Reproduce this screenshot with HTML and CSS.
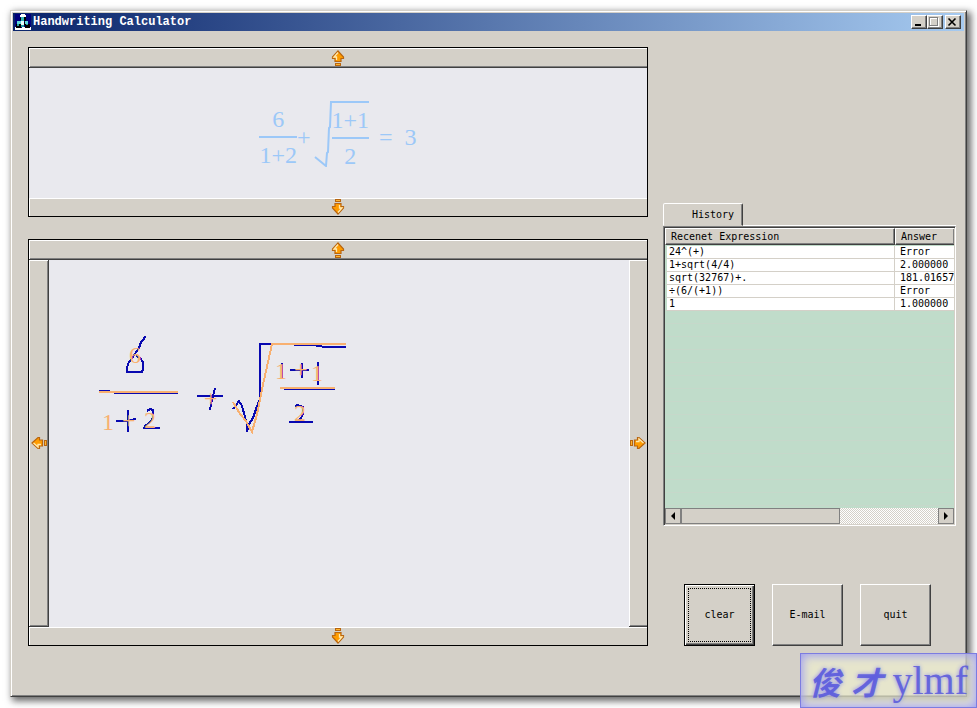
FILE: index.html
```html
<!DOCTYPE html>
<html lang="en">

<head>
  <meta charset="UTF-8">
  <meta name="viewport" content="width=device-width, initial-scale=1.0">
  <title>Handwriting Calculator</title>
  <link rel="stylesheet" href="styles.css">
</head>

<body>
  <!-- arrow shared by all scroll bars, pointing up -->
  <svg class="defs" aria-hidden="true">
    <symbol id="arrow" viewBox="0 0 14 16">
      <path d="M7 1 L12.500 7 V8.500 H10 V11.500 H4 V8.500 H1.500 V7 Z" fill="#ff9c00" stroke="#b8650f" stroke-width="1.200" />
      <path d="M7 2.500 L3 7 H5.500 V10" fill="none" stroke="#ffe9b0" stroke-width="1.300" />
      <rect x="4.500" y="13.500" width="5" height="2" fill="#ffb52e" stroke="#b8650f" />
    </symbol>
  </svg>

  <div class="window">
    <header class="title-bar">
      <svg class="app-icon" viewBox="0 0 16 16" shape-rendering="crispEdges" aria-hidden="true">
        <rect width="16" height="16" fill="#00007c" />
        <path d="M0 13h3v1h4v-1h3v1h4v-1h2v3H0z" fill="#fff" />
        <path d="M5 1h1V0h4v1h1v2h-1v1H6V3H5z" fill="#fff" />
        <path d="M6 3h3v4H6z" fill="#35b5b5" />
        <path d="M9 3h2v4H9zM5 4h1v2H5z" fill="#000" />
        <path d="M2 7h4v3H2zM10 7h3v3h-3z" fill="#5fdada" />
        <path d="M6 7h3v4H6z" fill="#e8ffff" />
        <path d="M1 10h5v4H1zM10 10h5v4h-5zM9 8h1v3H9z" fill="#000" />
        <path d="M2 10h2v2H2zM6 11h3v2H6zM11 10h2v1h-2z" fill="#2a9f9f" />
      </svg>
      <h1 class="title">Handwriting Calculator</h1>
      <div class="window-buttons">
        <button class="window-button" aria-label="Minimize">
          <svg viewBox="0 0 12 10"><path d="M3 7h6v2H3z" fill="#000" /></svg>
        </button>
        <button class="window-button" aria-label="Maximize" disabled>
          <svg viewBox="0 0 12 10" shape-rendering="crispEdges"><path d="M2.500 1.500h8v8h-8z" fill="none" stroke="#fff" /><path d="M1.500 .5h8v8h-8z" fill="none" stroke="#808080" /></svg>
        </button>
        <button class="window-button close" aria-label="Close">
          <svg viewBox="0 0 12 10"><path d="M2.500 1.500l7 7M9.500 1.500l-7 7" stroke="#000" stroke-width="1.600" /></svg>
        </button>
      </div>
    </header>

    <main class="content">
      <div class="panels">
        <section class="panel result">
          <button class="bar top" aria-label="Scroll result up"><svg class="arrow"><use href="#arrow" /></svg></button>
          <div class="formula">
            <div class="fraction"><span>6</span><span>1+2</span></div>
            <span class="plus">+</span>
            <div class="root">
              <svg class="radical" viewBox="0 0 18 66" aria-hidden="true">
                <path d="M1 56 L12 65 L13 52 L14 51 L15 27 L16 26 L17 1 H18" />
              </svg>
              <div class="fraction"><span>1+1</span><span>2</span></div>
            </div>
            <span class="equals">=</span>
            <span>3</span>
          </div>
          <button class="bar bottom" aria-label="Scroll result down"><svg class="arrow down"><use href="#arrow" /></svg></button>
        </section>

        <section class="panel writing">
          <button class="bar top" aria-label="Scroll up"><svg class="arrow"><use href="#arrow" /></svg></button>
          <div class="middle">
            <button class="bar left" aria-label="Scroll left"><svg class="arrow turn-left"><use href="#arrow" /></svg></button>
            <div class="canvas">
              <svg class="ink" width="320" height="200">
                <!-- pen strokes -->
                <g class="pen">
                  <path d="M96 76 L95 79 L92 82 L90 88 L87 92 L84 97 L80 102 L78 107 L78 112 H93 L94 109 V102 L91 98 L87 96" />
                  <path d="M50 131 H59 L67 133 H129" />
                  <path d="M67 161 H76 L87 159 M79 150 V172" />
                  <path d="M98 151 L101 149 L104 150 V157 L102 161 L95 167 M94 168 H111" />
                  <path d="M148 136 H174 M166 128 L164 136 L163 139 L161 150" />
                  <path d="M184 149 L187 145 L190 141 L193 146 L196 157 L198 164 V172 L200 164 L204 158 L208 146 L211 139 V84 H224 L264 85 L276 87 H297" />
                  <path d="M233 103 V119 M241 110 H260 M253 103 V118 M269 102 V125" />
                  <path d="M235 129 H286" />
                  <path d="M246 146 L249 145 L254 147 V154 L252 158 L247 162 M240 162 H264" />
                </g>
                <!-- recognised characters -->
                <g class="guess">
                  <path d="M50 132 H129 M231 128 H286" />
                  <path d="M184 142 L191 154 L197 161 L203 172 L208 154 L215 120 L223 84 H297" />
                  <text x="80" y="103">6</text>
                  <text x="53" y="170">1</text>
                  <text x="73" y="168">+</text>
                  <text x="95" y="168">2</text>
                  <text x="155" y="146">+</text>
                  <text x="226" y="119">1</text>
                  <text x="245" y="117">+</text>
                  <text x="262" y="121">1</text>
                  <text x="245" y="161">2</text>
                </g>
              </svg>
            </div>
            <button class="bar right" aria-label="Scroll right"><svg class="arrow turn-right"><use href="#arrow" /></svg></button>
          </div>
          <button class="bar bottom" aria-label="Scroll down"><svg class="arrow down"><use href="#arrow" /></svg></button>
        </section>
      </div>

      <aside class="side">
        <div class="tabs">
          <button class="tab">History</button>
          <div class="tab-line"></div>
        </div>
        <div class="list">
          <div class="list-view">
            <table class="history">
              <thead>
                <tr><th>Recenet Expression</th><th>Answer</th></tr>
              </thead>
              <tbody>
                <tr><td>24^(+)</td><td>Error</td></tr>
                <tr><td>1+sqrt(4/4)</td><td>2.000000</td></tr>
                <tr><td>sqrt(32767)+.</td><td>181.01657</td></tr>
                <tr><td>÷(6/(+1))</td><td>Error</td></tr>
                <tr><td>1</td><td>1.000000</td></tr>
              </tbody>
            </table>
            <div class="empty-rows"></div>
          </div>
          <div class="scrollbar">
            <button class="scroll-button" aria-label="Scroll list left"><svg viewBox="0 0 8 8"><path d="M6 0v8L2 4z" /></svg></button>
            <div class="thumb"></div>
            <div class="track"></div>
            <button class="scroll-button" aria-label="Scroll list right"><svg viewBox="0 0 8 8"><path d="M2 0v8l4-4z" /></svg></button>
          </div>
        </div>

        <div class="actions">
          <button class="action default"><span>clear</span></button>
          <button class="action"><span>E-mail</span></button>
          <button class="action"><span>quit</span></button>
        </div>
      </aside>
    </main>
  </div>

  <div class="watermark">
    <span class="name">俊</span>
    <span class="name">才</span>
    <span class="latin">ylmf</span>
  </div>
</body>

</html>
```
FILE: styles.css
```css
* {
  box-sizing: border-box;
}

body {
  margin: 0;
  min-height: 100vh;
  display: flex;
  padding: 10px 10px 11px;
  background-color: #fff;
  color: #000;
  font-family: "DejaVu Sans Mono", "Noto Sans CJK SC", monospace;
  font-size: 10px;
  line-height: 12px;
}

button {
  margin: 0;
  padding: 0;
  font: inherit;
  color: inherit;
  background-color: #d4d0c8;
}

.defs {
  position: absolute;
  width: 0;
  height: 0;
}

/* Window frame */
.window {
  flex: 1;
  display: flex;
  flex-direction: column;
  padding: 1px;
  background-color: #d4d0c8;
  border: 1px solid;
  border-color: #d4d0c8 #404040 #404040 #d4d0c8;
  box-shadow: inset 1px 1px #fff, inset -1px -1px #808080, 3px 3px 7px 1px rgba(0, 0, 0, 0.6);
}

.title-bar {
  display: flex;
  align-items: center;
  height: 18px;
  margin: 1px 1px 0;
  padding: 0 3px 0 2px;
  gap: 2px;
  background: linear-gradient(to right, #0a246a, #a6caf0);
}

.app-icon {
  width: 16px;
  height: 16px;
}

.title {
  flex: 1;
  margin: 0;
  color: #fff;
  font-family: "Liberation Mono", monospace;
  font-size: 12px;
  font-weight: bold;
}

.window-buttons {
  display: flex;
}

.window-button {
  width: 16px;
  height: 14px;
  border: 1px solid;
  border-color: #fff #404040 #404040 #fff;
  box-shadow: inset -1px -1px #808080;
}

.window-button svg {
  display: block;
  width: 12px;
  height: 10px;
}

.window-button.close {
  margin-left: 2px;
}

/* Page below the title bar */
.content {
  flex: 1;
  display: grid;
  grid-template-columns: 620fr 293fr;
  gap: 15px;
  padding: 16px 9px 49px 16px;
}

.panels {
  display: flex;
  flex-direction: column;
  gap: 22px;
}

.panel {
  display: flex;
  flex-direction: column;
  border: 1px solid #000;
  background-color: #e9e9ee;
}

.writing {
  flex: 1;
}

.bar {
  display: flex;
  align-items: center;
  justify-content: center;
  border: 0 solid #404040;
}

.top {
  height: 20px;
  border-bottom-width: 1px;
  box-shadow: inset 1px 1px #fff, inset 0 -1px #808080;
}

.bottom {
  height: 18px;
  box-shadow: inset 1px 1px #fff;
}

.left {
  width: 20px;
  border-width: 0 1px 1px 0;
  box-shadow: inset 1px 1px #fff, inset -1px -1px #808080;
}

.right {
  width: 18px;
  border-bottom-width: 1px;
  box-shadow: inset 1px 1px #fff, inset 0 -1px #808080;
}

.arrow {
  flex: none;
  width: 14px;
  height: 16px;
}

.down {
  transform: rotate(180deg);
}

.turn-left {
  transform: rotate(-90deg);
}

.turn-right {
  transform: rotate(90deg);
}

.middle {
  flex: 1;
  display: flex;
}

.canvas {
  flex: 1;
}

/* Recognised formula with its result */
.formula {
  display: flex;
  align-items: center;
  justify-content: center;
  height: 130px;
  padding-top: 8px;
  color: #9cc8f8;
  font-family: "Liberation Serif", serif;
  font-size: 24px;
  line-height: 34px;
}

.fraction {
  display: flex;
  flex-direction: column;
  text-align: center;
}

.fraction span:first-child {
  border-bottom: 2px solid #9cc8f8;
}

.root {
  display: flex;
  margin-left: 3px;
}

.root .fraction {
  border-top: 2px solid #9cc8f8;
  line-height: 34px;
}

.radical {
  width: 18px;
  height: 66px;
  fill: none;
  stroke: #9cc8f8;
  stroke-width: 2;
}

.equals {
  margin: 0 12px 0 10px;
}

/* Handwriting area */
.ink {
  display: block;
}

.pen {
  fill: none;
  stroke: #0808b0;
  stroke-width: 2;
  shape-rendering: crispEdges;
}

.guess path {
  fill: none;
  stroke: #f8b070;
  stroke-width: 2;
  shape-rendering: crispEdges;
}

.guess text {
  fill: #f8b070;
  font-family: "Liberation Serif", serif;
  font-size: 24px;
}

/* History list */
.side {
  display: flex;
  flex-direction: column;
  min-width: 0;
  padding-top: 156px;
}

.tabs {
  display: flex;
}

.tab {
  width: 80px;
  height: 23px;
  padding-left: 20px;
  border: 1px solid;
  border-color: #fff #404040 transparent #fff;
  border-radius: 2px 2px 0 0;
  box-shadow: inset -1px 0 #808080;
}

.tab-line {
  flex: 1;
  border-bottom: 1px solid #fff;
}

.list {
  display: flex;
  flex-direction: column;
  height: 300px;
  border: 1px solid;
  border-color: #808080 #fff #fff #808080;
  box-shadow: inset 1px 1px #404040, inset -1px -1px #d4d0c8;
  padding: 1px;
}

.list-view {
  flex: 1;
  display: flex;
  flex-direction: column;
  overflow: hidden;
  background-color: #c0dcca;
}

.history {
  width: 100%;
  table-layout: fixed;
  border-collapse: separate;
  border-spacing: 0;
}

.history th {
  height: 17px;
  padding: 1px 0 0 5px;
  text-align: left;
  font-weight: normal;
  white-space: nowrap;
  background-color: #d4d0c8;
  border: 1px solid;
  border-color: #fff #404040 #404040 #fff;
  box-shadow: inset -1px -1px #808080;
}

.history th:first-child {
  width: 230px;
}

.history th:last-child {
  border-right: 0;
}

.history td {
  height: 13px;
  padding: 0 0 0 5px;
  white-space: nowrap;
  overflow: hidden;
  background-color: #fff;
  border-bottom: 1px solid #d4d0c8;
}

.history tbody tr:first-child td {
  border-top: 1px solid #c0dcca;
}

.history td:first-child {
  padding-left: 2px;
  border-left: 2px solid #c0dcca;
  border-right: 1px solid #d4d0c8;
}

.empty-rows {
  flex: 1;
  background: repeating-linear-gradient(transparent 0 12px, #c6d8ca 12px 13px);
}

.scrollbar {
  display: flex;
  height: 16px;
}

.scroll-button {
  width: 16px;
  border: 1px solid #808080;
}

.scroll-button svg {
  display: block;
  width: 8px;
  height: 8px;
  margin: 0 auto;
}

.thumb {
  flex: 158;
  border: 1px solid #808080;
  background-color: #d4d0c8;
}

.track {
  flex: 99;
  background: repeating-conic-gradient(#fff 0 25%, #d4d0c8 0 50%) 0 0 / 2px 2px;
}

/* Buttons */
.actions {
  display: flex;
  gap: 17px;
  margin-top: auto;
  padding-left: 21px;
}

.action {
  width: 71px;
  height: 62px;
  border: 1px solid;
  border-color: #fff #404040 #404040 #fff;
  box-shadow: inset -1px -1px #808080;
}

.default {
  padding: 3px;
  border-color: #000;
  box-shadow: inset 1px 1px #fff, inset -1px -1px #404040, inset -2px -2px #808080;
}

.default span {
  display: flex;
  align-items: center;
  justify-content: center;
  height: 100%;
  border: 1px dotted #000;
}

/* Stamp over the window corner */
.watermark {
  position: absolute;
  right: 0;
  bottom: 0;
  display: flex;
  align-items: center;
  justify-content: space-between;
  width: 177px;
  height: 55px;
  padding: 0 8px;
  color: rgba(80, 80, 220, 0.8);
  background-color: rgba(238, 238, 205, 0.7);
  border: 1px solid #7c7ce0;
  box-shadow: inset 0 0 10px 2px #a0a0f0;
  text-shadow: 0 0 4px #8c8cec;
}

.name {
  font-family: "Noto Sans CJK SC", sans-serif;
  font-size: 32px;
  font-style: italic;
  font-weight: bold;
  line-height: 52px;
}

.latin {
  font-family: "Liberation Serif", serif;
  font-size: 40px;
  line-height: 52px;
}
```
